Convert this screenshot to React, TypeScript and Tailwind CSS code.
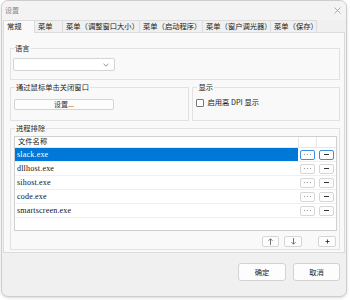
import React from 'react';

const cjk = "font-['Noto_Sans_CJK_SC',sans-serif]";

const tabs = [
  { label: '常规', w: 'w-[31px]' },
  { label: '菜单', w: 'w-[28px]' },
  { label: '菜单（调整窗口大小）', w: 'w-[77px]' },
  { label: '菜单（启动程序）', w: 'w-[63px]' },
  { label: '菜单（窗户调光器）', w: 'w-[68px]' },
  { label: '菜单（保存）', w: 'w-[47px]' },
];

const processes = ['slack.exe', 'dllhost.exe', 'sihost.exe', 'code.exe', 'smartscreen.exe'];

const Legend: React.FC<{ text: string }> = ({ text }) => (
  <legend className="ml-[1px] px-[1px] h-[9px] leading-[9px] text-[7.3px] text-[#1f1f1f]">{text}</legend>
);

const SmallButton: React.FC<{ active?: boolean; children: React.ReactNode; className?: string }> = ({ active, children, className }) => (
  <div
    className={`h-[10px] flex items-center justify-center rounded-[2px] border bg-[#fdfdfd] ${
      active ? 'border-[#3b8fe0]' : 'border-[#d6d6d6]'
    } ${className ?? ''}`}
  >
    {children}
  </div>
);

const Dots: React.FC = () => (
  <span className="flex gap-[2px]">
    <span className="w-[1px] h-[1px] bg-[#999]" />
    <span className="w-[1px] h-[1px] bg-[#999]" />
    <span className="w-[1px] h-[1px] bg-[#999]" />
  </span>
);

const Arrow: React.FC<{ down?: boolean }> = ({ down }) => (
  <svg width="5" height="7" viewBox="0 0 5 7">
    {down ? (
      <path d="M2.5 0 V6.2 M0.5 4.2 L2.5 6.2 L4.5 4.2" fill="none" stroke="#555" strokeWidth="0.8" />
    ) : (
      <path d="M2.5 7 V0.8 M0.5 2.8 L2.5 0.8 L4.5 2.8" fill="none" stroke="#555" strokeWidth="0.8" />
    )}
  </svg>
);

const App: React.FC = () => {
  return (
    <div className={`w-[350px] h-[300px] bg-white ${cjk}`}>
      <div className="ml-[1px] w-[346px] h-[297px] rounded-[7px] border border-[#cdcdcd] bg-[#f0f0f0] shadow-[0_1px_3px_rgba(0,0,0,0.15)] flex flex-col overflow-hidden">
        {/* Title bar */}
        <div className="h-[19px] flex items-center justify-between pl-[3px] pr-[5px] bg-[#f3f3f3]">
          <span className="text-[7px] text-[#8a8a8a]">设置</span>
          <svg width="7" height="7" viewBox="0 0 7 7" className="text-[#9a9a9a]">
            <path d="M0.5 0.5 L6.5 6.5 M6.5 0.5 L0.5 6.5" stroke="currentColor" strokeWidth="0.8" />
          </svg>
        </div>

        {/* Tabs */}
        <div className="ml-[1px] h-[12px] flex items-end">
          {tabs.map((t, i) => (
            <div
              key={t.label}
              className={`${t.w} h-[12px] pl-[3px] flex items-center whitespace-nowrap text-[7.3px] leading-none border-t border-l border-[#dcdcdc] ${
                i === tabs.length - 1 ? 'border-r' : ''
              } ${i === 0 ? 'bg-[#f9f9f9] relative z-10 -mb-px h-[13px] text-[#111]' : 'bg-[#f0f0f0] text-[#222]'}`}
            >
              {t.label}
            </div>
          ))}
        </div>

        {/* Tab panel */}
        <div className="mx-[1px] h-[221px] border border-[#dcdcdc] bg-[#f9f9f9] pl-[6px] pr-[4px] pt-[11px] flex flex-col gap-[3px]">
          {/* 语言 */}
          <fieldset className="h-[36px] border border-[#e2e2e2] pl-[2px]">
            <Legend text="语言" />
            <div className="mt-[5px] w-[102px] h-[13px] rounded-[2px] border border-[#d4d4d4] bg-white flex items-center justify-end pr-[5px]">
              <svg width="6" height="4" viewBox="0 0 6 4">
                <path d="M0.5 0.8 L3 3.2 L5.5 0.8" fill="none" stroke="#777" strokeWidth="0.8" />
              </svg>
            </div>
          </fieldset>

          {/* Close by mouse / display */}
          <div className="flex gap-[3px]">
            <fieldset className="w-[180px] h-[38px] border border-[#e2e2e2] pl-[3px]">
              <Legend text="通过鼠标单击关闭窗口" />
              <div className="mt-[7px] w-[100px] h-[11px] rounded-[2px] border border-[#d4d4d4] bg-[#fdfdfd] flex items-center justify-center text-[7px] text-[#333]">
                设置...
              </div>
            </fieldset>
            <fieldset className="w-[148px] h-[38px] border border-[#e2e2e2] pl-[3px]">
              <Legend text="显示" />
              <div className="mt-[7px] flex items-center gap-[3px] text-[7.3px] text-[#222] leading-none">
                <span className="w-[8px] h-[8px] rounded-[1px] border border-[#777] bg-white" />
                <span>启用高 DPI 显示</span>
              </div>
            </fieldset>
          </div>

          {/* 进程排除 */}
          <fieldset className="h-[126px] border border-[#e2e2e2] pl-[3px]">
            <Legend text="进程排除" />
            <div className="mt-[3px] w-[323px] h-[95px] border border-[#cfcfcf] bg-white flex flex-col">
              <div className="h-[11px] flex border-b border-[#e6e6e6] text-[7.3px] leading-none text-[#222]">
                <div className="w-[283px] pl-[3px] flex items-center">文件名称</div>
                <div className="w-[18px] border-l border-[#e6e6e6]" />
                <div className="flex-1 border-l border-[#e6e6e6]" />
              </div>
              {processes.map((p, i) => (
                <div key={p} className="h-[14px] flex border-b border-[#efefef]">
                  <div
                    className={`w-[283px] pl-[2px] flex items-center font-['Liberation_Serif',serif] text-[8px] tracking-[0.2px] ${
                      i === 0 ? 'bg-[#0078d7] text-white' : 'text-[#111]'
                    }`}
                  >
                    {p}
                  </div>
                  <div className="w-[18px] flex items-center justify-center">
                    <SmallButton active={i === 0} className="w-[15px]">
                      <Dots />
                    </SmallButton>
                  </div>
                  <div className="flex-1 flex items-center justify-center">
                    <SmallButton active={i === 0} className="w-[15px]">
                      <span className="block w-[5px] h-[1px] bg-[#333]" />
                    </SmallButton>
                  </div>
                </div>
              ))}
            </div>
            <div className="mt-[5px] w-[323px] flex justify-end pr-[1px]">
              <SmallButton className="w-[17px] h-[11px]">
                <Arrow />
              </SmallButton>
              <SmallButton className="ml-[5px] w-[18px] h-[11px]">
                <Arrow down />
              </SmallButton>
              <SmallButton className="ml-[16px] w-[18px] h-[11px]">
                <svg width="5" height="5" viewBox="0 0 5 5">
                  <path d="M2.5 0.5 V4.5 M0.5 2.5 H4.5" fill="none" stroke="#333" strokeWidth="0.9" />
                </svg>
              </SmallButton>
            </div>
          </fieldset>
        </div>

        {/* Footer buttons */}
        <div className="flex-1 flex justify-end items-start pt-[10px] pr-[6px] gap-[7px]">
          <div className="w-[48px] h-[18px] rounded-[3px] border border-[#d2d2d2] bg-[#fdfdfd] flex items-center justify-center text-[7.3px] text-[#222]">
            确定
          </div>
          <div className="w-[47px] h-[18px] rounded-[3px] border border-[#d2d2d2] bg-[#fdfdfd] flex items-center justify-center text-[7.3px] text-[#222]">
            取消
          </div>
        </div>
      </div>
    </div>
  );
};

export default App;
